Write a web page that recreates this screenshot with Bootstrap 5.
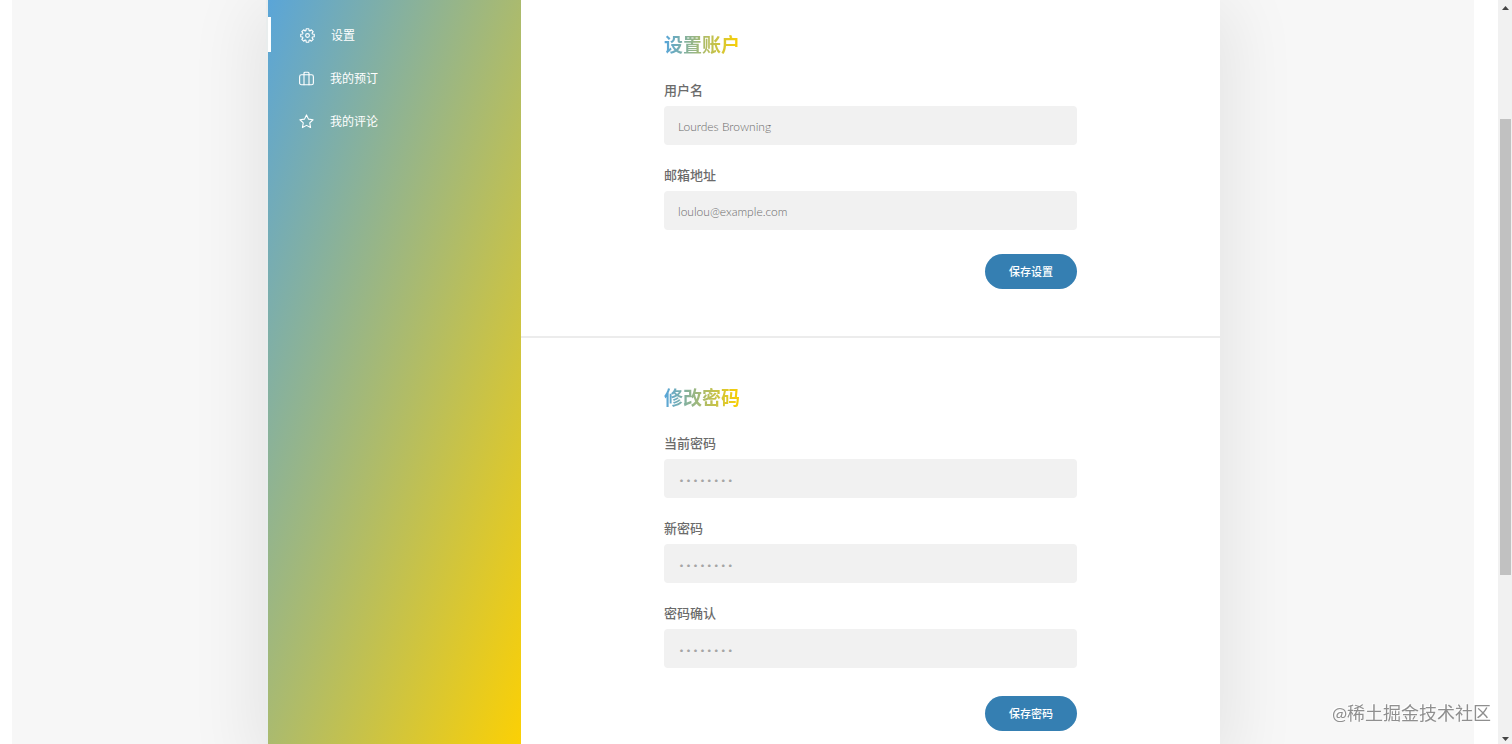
<!DOCTYPE html>
<html lang="zh-CN">
<head>
<meta charset="utf-8">
<meta name="viewport" content="width=device-width, initial-scale=1">
<title>设置账户</title>
<link href="https://cdn.jsdelivr.net/npm/bootstrap@5.3.0/dist/css/bootstrap.min.css" rel="stylesheet">
<style>
body{font-family:Lato,"Noto Sans CJK SC",sans-serif;color:#6b6b6b;background:#fff}
.page-area{background:#f7f7f7;margin-left:12px;margin-right:24px;min-width:0}
.account-view{max-width:954px;border-left:2px solid #e9eded;background:#fff;box-shadow:0 16px 64px 12px rgba(0,0,0,.08)}
.side-menu{width:253px;padding-top:17px;background:linear-gradient(to right bottom,#5aa5d8,#fbd005)}
.side-menu ul{gap:8px}
.side-menu a{height:35px;padding:2px 0 0 31px;gap:16px;font-size:12px;color:#fff;border-left:0 solid #fff}
.side-menu a.active{border-left-width:3px;padding-left:29px}
.side-menu svg{width:15px;height:15px;fill:none;stroke:#fff;stroke-width:1.8;stroke-linecap:round;stroke-linejoin:round}
.form-block{max-width:413px}
.form-title{font-size:19px;line-height:28px;font-weight:700;margin-bottom:21px;background:linear-gradient(to right,#55a5dc,#fdd000);-webkit-background-clip:text;background-clip:text;color:transparent}
.field-label{font-size:13px;line-height:20px;font-weight:500;margin-bottom:6px;display:block}
.field-input{height:39px;padding:2px 14px 0;font-size:12px;font-weight:300;color:#6b6b6b;background:#f1f1f1;border:0;border-radius:4px}
.field-input::placeholder{color:#a5a5a5;opacity:1;font-weight:100}
.form-fields{gap:20px}
.btn-save{width:92px;height:35px;padding:2px 0 0;font-size:11px;font-weight:500;color:#fff;background:#357fb2;border:0}
.btn-save:hover{background:#2b6f9e;color:#fff}
.section-first{padding-top:31px;padding-bottom:47px;border-bottom:2px solid #ececec}
.section-second{padding-top:46px;padding-bottom:13px}
.scroll-track{width:14px;background:#f1f1f1;padding:6px 1px 3px 2px}
.scroll-track svg{width:7px;height:4px;fill:#444}
.scroll-thumb{flex:0 0 62%;background:#c1c1c1}
.scroll-gap{flex:0 0 109px}
.page-credit{right:21px;bottom:18px;font-size:18px;line-height:26px;color:#8f8f8f;text-shadow:-1px -1px 0 #fff}
</style>
</head>
<body>
<div class="d-flex min-vh-100">
  <main class="page-area flex-grow-1 d-flex overflow-hidden">
    <div class="account-view d-flex flex-grow-1 mx-auto">
      <nav class="side-menu flex-shrink-0" aria-label="账户">
        <ul class="list-unstyled d-flex flex-column m-0">
          <li><a class="active d-flex align-items-center text-decoration-none" href="#settings"><svg viewBox="0 0 24 24"><circle cx="12" cy="12" r="3"/><path d="M9.900 1.200H14.100L14.500 4.200 15.800 4.700 18.150 2.900 21.100 5.850 19.300 8.200 19.800 9.500 22.800 9.900V14.100L19.800 14.500 19.300 15.800 21.100 18.150 18.150 21.100 15.800 19.300 14.500 19.800 14.100 22.800H9.900L9.500 19.800 8.200 19.300 5.850 21.100 2.900 18.150 4.700 15.800 4.200 14.500 1.200 14.100V9.900L4.200 9.500 4.700 8.200 2.900 5.850 5.850 2.900 8.200 4.700 9.500 4.200Z"/></svg><span>设置</span></a></li>
          <li><a class="d-flex align-items-center text-decoration-none" href="#bookings"><svg viewBox="0 0 24 24"><rect x="1" y="6" width="22" height="16" rx="3"/><path d="M8 22V3.500Q8 2 9.500 2h5Q16 2 16 3.500V22"/></svg><span>我的预订</span></a></li>
          <li><a class="d-flex align-items-center text-decoration-none" href="#reviews"><svg viewBox="0 0 24 24"><path d="M12 1.500l3.200 6.700 7.300 1-5.300 5.100 1.300 7.400L12 18.200l-6.500 3.500 1.300-7.400L1.500 9.200l7.300-1z"/></svg><span>我的评论</span></a></li>
        </ul>
      </nav>
      <div class="flex-grow-1">
        <section class="section-first" id="settings">
          <form class="form-block mx-auto">
            <h2 class="form-title d-table">设置账户</h2>
            <div class="form-fields d-flex flex-column">
              <div><label class="field-label" for="name">用户名</label><input class="field-input w-100" id="name" type="text" value="Lourdes Browning"></div>
              <div><label class="field-label" for="email">邮箱地址</label><input class="field-input w-100" id="email" type="email" value="loulou@example.com"></div>
            </div>
            <div class="d-flex justify-content-end mt-4"><button class="btn btn-save rounded-pill" type="button">保存设置</button></div>
          </form>
        </section>
        <section class="section-second">
          <form class="form-block mx-auto">
            <h2 class="form-title d-table">修改密码</h2>
            <div class="form-fields d-flex flex-column">
              <div><label class="field-label" for="current">当前密码</label><input class="field-input w-100" id="current" type="password" placeholder="••••••••"></div>
              <div><label class="field-label" for="new">新密码</label><input class="field-input w-100" id="new" type="password" placeholder="••••••••"></div>
              <div><label class="field-label" for="confirm">密码确认</label><input class="field-input w-100" id="confirm" type="password" placeholder="••••••••"></div>
            </div>
            <div class="d-flex justify-content-end mt-4 pt-1"><button class="btn btn-save rounded-pill" type="button">保存密码</button></div>
          </form>
        </section>
      </div>
    </div>
  </main>
  <div class="scroll-track d-flex flex-column align-items-center" aria-hidden="true">
    <svg viewBox="0 0 7 4"><path d="M0 4L3.500 0 7 4z"/></svg>
    <div class="scroll-gap"></div>
    <div class="scroll-thumb w-100"></div>
    <svg class="mt-auto" viewBox="0 0 7 4"><path d="M0 0h7L3.500 4z"/></svg>
  </div>
</div>
<div class="page-credit position-fixed">@稀土掘金技术社区</div>
<script src="https://cdn.jsdelivr.net/npm/bootstrap@5.3.0/dist/js/bootstrap.bundle.min.js"></script>
</body>
</html>
